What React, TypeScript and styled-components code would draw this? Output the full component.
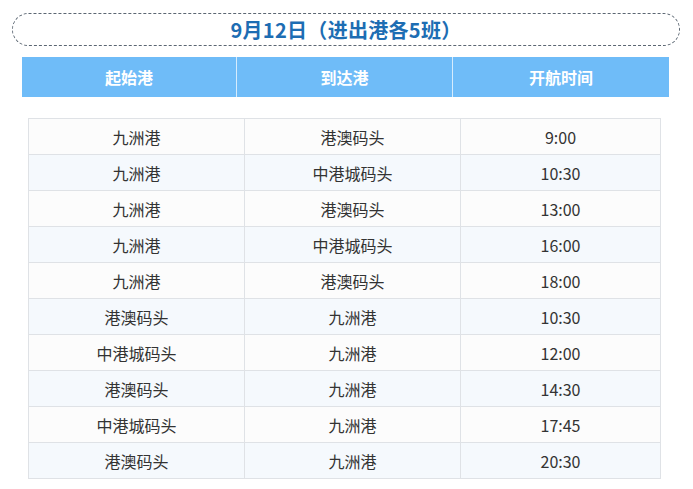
import React from 'react';
import styled, { createGlobalStyle } from 'styled-components';

const GlobalStyle = createGlobalStyle`
  html, body {
    margin: 0;
    padding: 0;
    background: #ffffff;
  }
  body {
    font-family: "Noto Sans CJK SC", "Noto Sans", sans-serif;
  }
`;

const Page = styled.div`
  width: 693px;
  height: 489px;
  overflow: hidden;
  padding-top: 13px;
  box-sizing: border-box;
`;

const TitlePill = styled.div`
  margin: 0 13px 0 12px;
  height: 33px;
  box-sizing: border-box;
  border: 1px dashed #5b6672;
  border-radius: 17px;
  display: flex;
  align-items: center;
  justify-content: center;
  color: #1d6db3;
  font-size: 20px;
  font-weight: 700;
  letter-spacing: 0.3px;
`;

const HeaderBar = styled.div`
  margin: 11px 24px 0 22px;
  height: 40px;
  display: grid;
  grid-template-columns: 215px 216px 1fr;
  background: #6fbcf8;
`;

const HeaderCell = styled.div<{ $last?: boolean }>`
  display: flex;
  align-items: center;
  justify-content: center;
  color: #ffffff;
  font-size: 16px;
  font-weight: 700;
  border-right: ${(p) => (p.$last ? 'none' : '1px solid #d6ecfd')};
`;

const Table = styled.div`
  margin: 21px 0 0 28px;
  width: 633px;
  box-sizing: border-box;
  border-top: 1px solid #dfe2e6;
  border-left: 1px solid #dfe2e6;
  border-right: 1px solid #dfe2e6;
`;

const Row = styled.div<{ $alt: boolean }>`
  display: grid;
  grid-template-columns: 216px 216px 1fr;
  height: 36px;
  box-sizing: border-box;
  border-bottom: 1px solid #dfe2e6;
  background: ${(p) => (p.$alt ? '#f5f9fd' : '#fcfcfc')};
`;

const Cell = styled.div<{ $last?: boolean }>`
  display: flex;
  align-items: center;
  justify-content: center;
  font-size: 16px;
  color: #333333;
  border-right: ${(p) => (p.$last ? 'none' : '1px solid #dfe2e6')};
`;

const rows: [string, string, string][] = [
  ['九洲港', '港澳码头', '9:00'],
  ['九洲港', '中港城码头', '10:30'],
  ['九洲港', '港澳码头', '13:00'],
  ['九洲港', '中港城码头', '16:00'],
  ['九洲港', '港澳码头', '18:00'],
  ['港澳码头', '九洲港', '10:30'],
  ['中港城码头', '九洲港', '12:00'],
  ['港澳码头', '九洲港', '14:30'],
  ['中港城码头', '九洲港', '17:45'],
  ['港澳码头', '九洲港', '20:30'],
];

export default function App() {
  return (
    <Page>
      <GlobalStyle />
      <TitlePill>9月12日（进出港各5班）</TitlePill>
      <HeaderBar>
        <HeaderCell>起始港</HeaderCell>
        <HeaderCell>到达港</HeaderCell>
        <HeaderCell $last>开航时间</HeaderCell>
      </HeaderBar>
      <Table>
        {rows.map((r, i) => (
          <Row key={i} $alt={i % 2 === 1}>
            <Cell>{r[0]}</Cell>
            <Cell>{r[1]}</Cell>
            <Cell $last>{r[2]}</Cell>
          </Row>
        ))}
      </Table>
    </Page>
  );
}
